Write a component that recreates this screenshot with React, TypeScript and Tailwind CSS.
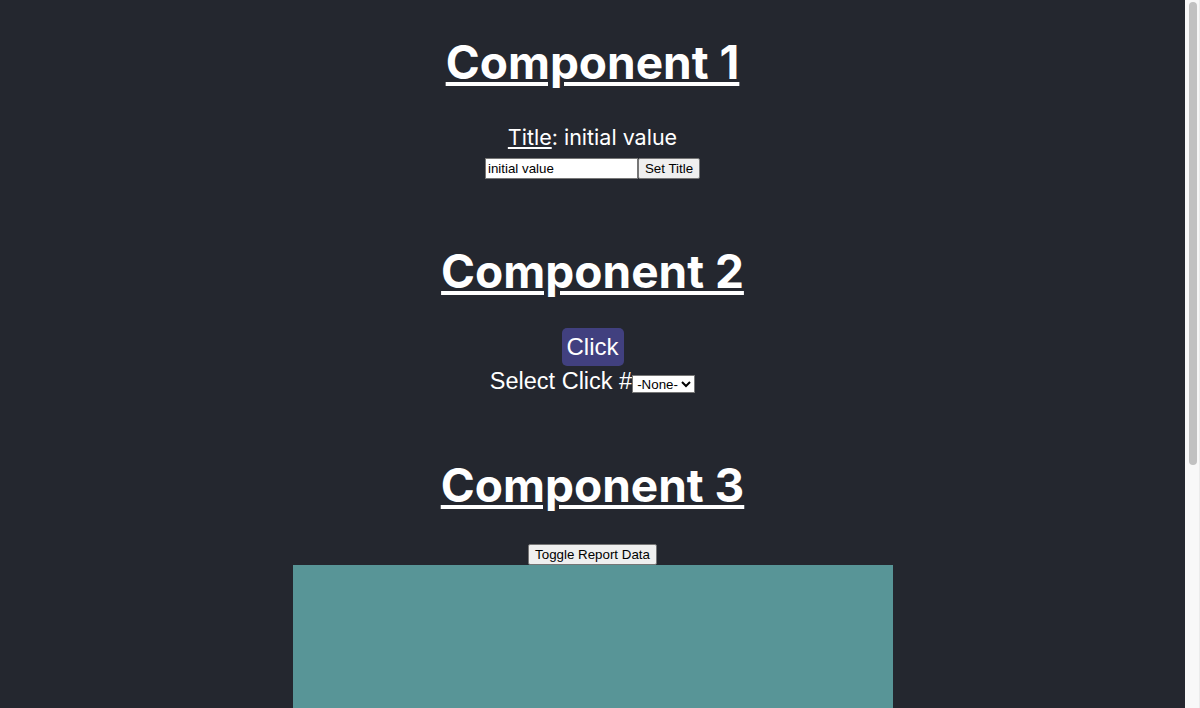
import { useState } from "react";

export default function App() {
  const [value, setValue] = useState("initial value");
  const [title, setTitle] = useState("initial value");
  const [clicks, setClicks] = useState(0);
  const [show, setShow] = useState(true);

  const ctrl =
    "h-[21px] text-[13.33px] leading-[15px] text-black font-['Liberation_Sans',Arial,sans-serif]";
  const heading = "font-['Inter',sans-serif] text-[46px] font-bold underline leading-[53px]";

  return (
    <div className="h-screen flex overflow-hidden bg-[#24272f]">
      <div className="flex-1 min-w-0 overflow-hidden text-white text-center font-['Liberation_Sans',Arial,sans-serif]">
        <section className="pt-[36px]">
          <h1 className={heading}>Component 1</h1>
          <div className="mt-[35px] font-['Inter',sans-serif] text-[21.5px] leading-[26px]">
            <span className="underline">Title</span>: initial value
          </div>
          <div className="mt-[8px] flex justify-center">
            <input
              className={`${ctrl} w-[153px] bg-white border border-[#767676] px-[2px] outline-none`}
              value={value}
              onChange={(e) => setValue(e.target.value)}
            />
            <button
              className={`${ctrl} bg-[#efefef] border border-[#767676] rounded-[2px] px-[6px]`}
              onClick={() => setTitle(value)}
              data-title={title}
            >
              Set Title
            </button>
          </div>
        </section>

        <section className="mt-[66px]">
          <h1 className={heading}>Component 2</h1>
          <div className="mt-[30px] flex justify-center">
            <button
              className="h-[38px] px-[5px] bg-[#41407f] rounded-[5px] text-[24px] leading-[28px] text-white"
              onClick={() => setClicks(clicks + 1)}
            >
              Click
            </button>
          </div>
          <div className="mt-[2px] text-[23.5px] leading-[27px]">
            Select Click #
            <select className="h-[18px] text-[13.33px] text-black bg-white border border-[#767676] align-baseline font-['Liberation_Sans',Arial,sans-serif]">
              <option>-None-</option>
            </select>
          </div>
        </section>

        <section className="mt-[64px]">
          <h1 className={heading}>Component 3</h1>
          <div className="mt-[32px] flex justify-center">
            <button
              className={`${ctrl} bg-[#efefef] border border-[#767676] rounded-[2px] px-[6px]`}
              onClick={() => setShow(!show)}
            >
              Toggle Report Data
            </button>
          </div>
          {show && <div className="mx-auto w-[600px] h-[500px] bg-[#589597]" />}
        </section>
      </div>

      <div className="w-[15px] shrink-0 bg-[#f8f8f8] border-r border-[#ebebeb] pt-[2px] pl-[4px] pr-[2px]">
        <div className="w-[8px] h-[463px] rounded-full bg-[#c1c1c1]" />
      </div>
    </div>
  );
}
